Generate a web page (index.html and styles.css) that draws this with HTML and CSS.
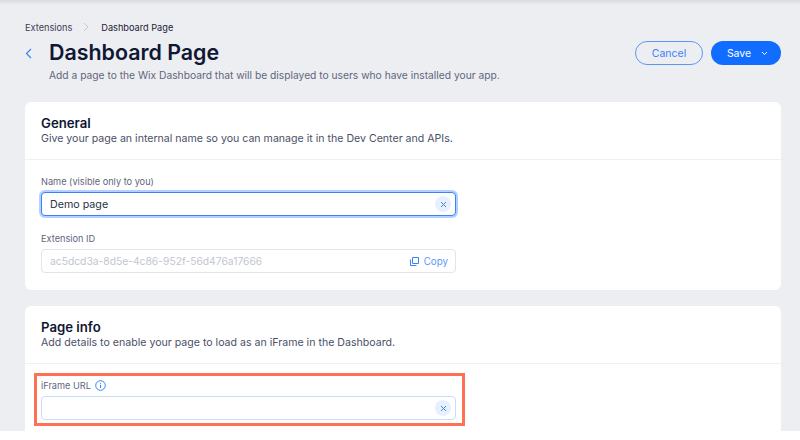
FILE: index.html
```html
<!DOCTYPE html>
<html lang="en">
  <head>
    <meta charset="UTF-8" />
    <title>Dashboard Page</title>
    <link rel="stylesheet" href="styles.css">
  </head>
  <body>
    <div class="page">
      <div class="breadcrumbs">
        <span>Extensions</span>
        <svg class="crumb-sep" width="6" height="10" viewBox="0 0 6 10"><path d="M1 1l4 4-4 4" fill="none" stroke="#c4c8d2" stroke-width="1"/></svg>
        <span class="crumb-current">Dashboard Page</span>
      </div>

      <div class="header">
        <svg class="back" width="7" height="11" viewBox="0 0 7 11"><path d="M6 1L1.500 5.500 6 10" fill="none" stroke="#3b82f6" stroke-width="1.2"/></svg>
        <div class="header-text">
          <h1>Dashboard Page</h1>
          <p>Add a page to the Wix Dashboard that will be displayed to users who have installed your app.</p>
        </div>
        <div class="actions">
          <button class="btn btn-cancel">Cancel</button>
          <button class="btn btn-save"><span>Save</span>
            <svg width="7" height="5" viewBox="0 0 7 5"><path d="M1 1l2.500 2.500L6 1" fill="none" stroke="#fff" stroke-width="1"/></svg>
          </button>
        </div>
      </div>

      <section class="card card-general">
        <div class="card-head">
          <h2>General</h2>
          <p>Give your page an internal name so you can manage it in the Dev Center and APIs.</p>
        </div>
        <div class="card-body">
          <div class="field">
            <label>Name (visible only to you)</label>
            <div class="input input-focus">
              <span class="value">Demo page</span>
              <span class="clear"><svg width="7" height="7" viewBox="0 0 7 7"><path d="M1 1l5 5M6 1L1 6" stroke="#3b82f6" stroke-width="1"/></svg></span>
            </div>
          </div>
          <div class="field">
            <label>Extension ID</label>
            <div class="input input-readonly">
              <span class="value">ac5dcd3a-8d5e-4c86-952f-56d476a17666</span>
              <span class="copy">
                <svg width="9" height="9" viewBox="0 0 9 9"><path d="M2.500.5h6v6h-6zM.5 2.500v6h6" fill="none" stroke="#3b82f6" stroke-width="1"/></svg>
                Copy
              </span>
            </div>
          </div>
        </div>
      </section>

      <section class="card card-info">
        <div class="card-head">
          <h2>Page info</h2>
          <p>Add details to enable your page to load as an iFrame in the Dashboard.</p>
        </div>
        <div class="card-body">
          <div class="field field-marked">
            <label>iFrame URL
              <svg class="info" width="11" height="11" viewBox="0 0 11 11"><circle cx="5.500" cy="5.500" r="4.800" fill="none" stroke="#3b82f6" stroke-width="1"/><path d="M5.500 4.800v3.200M5.500 2.800v1" stroke="#3b82f6" stroke-width="1"/></svg>
            </label>
            <div class="input input-empty">
              <span class="value"></span>
              <span class="clear"><svg width="7" height="7" viewBox="0 0 7 7"><path d="M1 1l5 5M6 1L1 6" stroke="#3b82f6" stroke-width="1"/></svg></span>
            </div>
            <div class="marker"></div>
          </div>
        </div>
      </section>
    </div>
  </body>
</html>
```

FILE: styles.css
```css
html,
body {
  margin: 0;
  height: 100%;
  background-color: #fff;
  overflow: hidden;
}
body {
  font-family: Inter, "Noto Sans", sans-serif;
  color: #0f1732;
}
.page {
  height: 431px;
  box-sizing: border-box;
  overflow: hidden;
  padding: 21px 19px 0 25px;
  background: linear-gradient(#d9dbe0, #edeef2 5px);
  background-color: #edeef2;
}
.breadcrumbs {
  display: flex;
  align-items: center;
  height: 12px;
  font-size: 9.200px;
  color: #3b4057;
}
.crumb-sep {
  margin: 0 12px 0 11px;
}
.crumb-current {
  color: #1b2238;
}
.header {
  display: flex;
  margin-top: 2px;
}
.back {
  margin: 13px 17px 0 0;
}
.header-text {
  flex: 1;
}
h1 {
  margin: 0;
  font-size: 21.400px;
  line-height: 34px;
  font-weight: 600;
  color: #0f1732;
}
.header-text p {
  margin: -1px 0 0;
  font-size: 10.250px;
  line-height: 14px;
  color: #5f667d;
}
.actions {
  display: flex;
  gap: 8px;
  margin-top: 6px;
}
.btn {
  height: 24px;
  box-sizing: border-box;
  border-radius: 12px;
  font-family: inherit;
  font-size: 10.500px;
  padding: 0;
}
.btn-cancel {
  width: 68px;
  background: transparent;
  border: 1px solid #5c97f8;
  color: #3b82f6;
}
.btn-save {
  width: 70px;
  padding-left: 3px;
  background-color: #116dff;
  border: none;
  color: #fff;
}
.btn-save svg {
  margin-left: 7px;
  vertical-align: 1px;
}
.card {
  background-color: #fff;
  border-radius: 6px;
  margin-top: 16px;
}
.card-general {
  margin-top: 20px;
  height: 188px;
}
.card-info {
  height: 140px;
}
.card-head {
  padding: 13px 16px 0;
  height: 44px;
  border-bottom: 1px solid #eef0f4;
}
h2 {
  margin: 0 0 1px;
  font-size: 13.200px;
  line-height: 16px;
  font-weight: 600;
  color: #0f1732;
}
.card-head p {
  margin: 0;
  font-size: 10.600px;
  line-height: 14px;
  color: #4a5068;
}
.card-body {
  padding: 14px 16px 0;
  width: 415px;
}
.field {
  margin-bottom: 15px;
}
.field-marked {
  position: relative;
}
label {
  display: flex;
  align-items: center;
  gap: 4px;
  height: 14px;
  font-size: 9.200px;
  color: #5f667d;
  margin-bottom: 4px;
}
.input {
  display: flex;
  align-items: center;
  justify-content: space-between;
  height: 24px;
  box-sizing: border-box;
  padding: 0 4px 0 8px;
  border-radius: 4px;
  font-size: 10.300px;
  background-color: #fff;
}
.input-focus {
  border: 1px solid #3b82f6;
  box-shadow: 0 0 0 2px #b3d0ff;
  color: #2a3148;
  font-size: 10.700px;
}
.input-readonly {
  border: 1px solid #e2e4ea;
  color: #c2c6d0;
}
.input-empty {
  border: 1px solid #c9dcfb;
}
.clear {
  display: flex;
  align-items: center;
  justify-content: center;
  width: 16px;
  height: 16px;
  border-radius: 50%;
  background-color: #e7f0ff;
}
.copy {
  display: flex;
  align-items: center;
  gap: 5px;
  font-size: 9.800px;
  color: #5c97f8;
  padding-right: 3px;
}
.marker {
  position: absolute;
  left: -7px;
  top: -5px;
  width: 431px;
  height: 53px;
  box-sizing: border-box;
  border: 3px solid #ff7155;
}
```
